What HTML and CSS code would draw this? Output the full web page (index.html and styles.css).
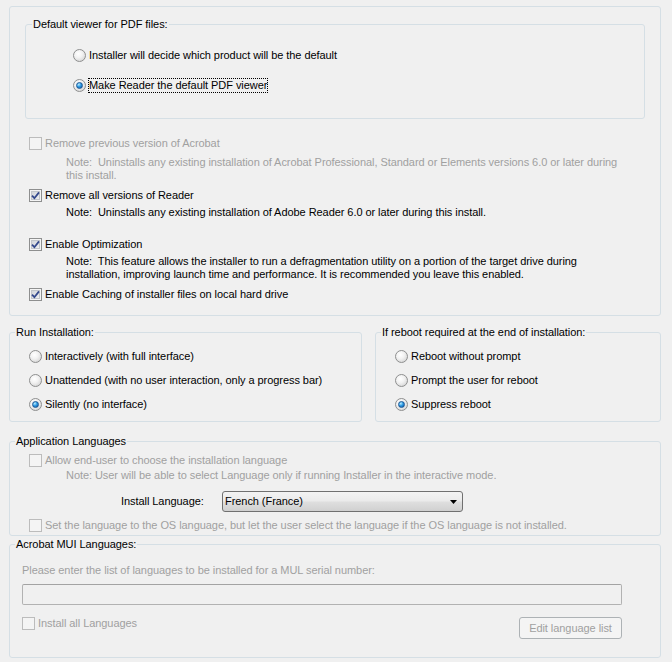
FILE: index.html
```html
<!DOCTYPE html>
<html>
<head>
    <title>Installer Options</title>
    <link rel="stylesheet" href="styles.css">
</head>
<body>
    <div class="panel">
        <fieldset class="viewer">
            <legend>Default viewer for PDF files:</legend>
            <div class="group-body">
                <div class="row"><span class="radio"></span><span>Installer will decide which product will be the default</span></div>
                <div class="row second"><span class="radio on"></span><span class="focus">Make Reader the default PDF viewer</span></div>
            </div>
        </fieldset>

        <div class="row check acrobat off"><span class="box disabled"></span><span>Remove previous version of Acrobat</span></div>
        <div class="note off first-note">Note:&nbsp; Uninstalls any existing installation of Acrobat Professional, Standard or Elements versions 6.0 or later during<br>this install.</div>

        <div class="row check reader"><span class="box"><svg width="9" height="9" viewBox="0 0 9 9"><path d="M1 4.6 L3.4 7.2 L8 1.4" fill="none" stroke="#34498c" stroke-width="1.8"/></svg></span><span>Remove all versions of Reader</span></div>
        <div class="note reader-note">Note:&nbsp; Uninstalls any existing installation of Adobe Reader 6.0 or later during this install.</div>

        <div class="row check optimize"><span class="box"><svg width="9" height="9" viewBox="0 0 9 9"><path d="M1 4.6 L3.4 7.2 L8 1.4" fill="none" stroke="#34498c" stroke-width="1.8"/></svg></span><span>Enable Optimization</span></div>
        <div class="note optimize-note">Note:&nbsp; This feature allows the installer to run a defragmentation utility on a portion of the target drive during<br>installation, improving launch time and performance. It is recommended you leave this enabled.</div>

        <div class="row check caching"><span class="box"><svg width="9" height="9" viewBox="0 0 9 9"><path d="M1 4.6 L3.4 7.2 L8 1.4" fill="none" stroke="#34498c" stroke-width="1.8"/></svg></span><span>Enable Caching of installer files on local hard drive</span></div>
    </div>

    <div class="columns">
        <fieldset class="run">
            <legend>Run Installation:</legend>
            <div class="group-body radios">
                <div class="row"><span class="radio"></span><span>Interactively (with full interface)</span></div>
                <div class="row"><span class="radio"></span><span>Unattended (with no user interaction, only a progress bar)</span></div>
                <div class="row"><span class="radio on"></span><span>Silently (no interface)</span></div>
            </div>
        </fieldset>
        <fieldset class="reboot">
            <legend>If reboot required at the end of installation:</legend>
            <div class="group-body radios">
                <div class="row"><span class="radio"></span><span>Reboot without prompt</span></div>
                <div class="row"><span class="radio"></span><span>Prompt the user for reboot</span></div>
                <div class="row"><span class="radio on"></span><span>Suppress reboot</span></div>
            </div>
        </fieldset>
    </div>

    <fieldset class="languages">
        <legend>Application Languages</legend>
        <div class="group-body">
            <div class="row off"><span class="box disabled"></span><span>Allow end-user to choose the installation language</span></div>
            <div class="note lang-note off">Note: User will be able to select Language only if running Installer in the interactive mode.</div>
            <div class="install-row">
                <span class="install-label">Install Language:</span>
                <div class="select">
                    <span>French (France)</span>
                    <svg width="7" height="4" viewBox="0 0 7 4"><path d="M0 0 H7 L3.5 4 Z" fill="#000"/></svg>
                </div>
            </div>
            <div class="row os-lang off"><span class="box disabled"></span><span>Set the language to the OS language, but let the user select the language if the OS language is not installed.</span></div>
        </div>
    </fieldset>

    <fieldset class="mui">
        <legend>Acrobat MUI Languages:</legend>
        <div class="group-body">
            <div class="off">Please enter the list of languages to be installed for a MUL serial number:</div>
            <div class="field"></div>
            <div class="mui-row">
                <div class="row off"><span class="box disabled"></span><span>Install all Languages</span></div>
                <button class="edit-button" disabled>Edit language list</button>
            </div>
        </div>
    </fieldset>
</body>
</html>
```

FILE: styles.css
```css
body {
    margin: 0;
    padding: 6px 11px 0 9px;
    background: #f0f0f0;
    font-family: "Liberation Sans", Arial, sans-serif;
    font-size: 11px;
    line-height: 13px;
    letter-spacing: -0.06px;
    color: #000;
}

.panel {
    width: 652px;
    box-sizing: border-box;
    border: 1px solid #d5dfe5;
    border-radius: 3px;
    padding: 0 15px 14px;
}

fieldset {
    margin: 0;
    padding: 0;
    border: 1px solid #d5dfe5;
    border-radius: 3px;
    min-width: 0;
}
legend {
    padding: 0 1px;
    margin-left: 5px;
    line-height: 13px;
}

.row {
    display: flex;
    align-items: center;
    height: 13px;
    white-space: nowrap;
}
.off { color: #a0a0a0; }

/* radio buttons */
.radio {
    flex: none;
    display: inline-flex;
    align-items: center;
    justify-content: center;
    width: 13px;
    height: 13px;
    box-sizing: border-box;
    margin-right: 3px;
    border: 1px solid #8e8f8f;
    border-radius: 50%;
    background: radial-gradient(circle at 40% 35%, #fff 0, #f2f2f2 40%, #cacaca 100%);
}
.radio.on::after {
    content: "";
    width: 5px;
    height: 5px;
    border: 1px solid #1c5896;
    border-radius: 50%;
    background: radial-gradient(circle at 35% 30%, #bdeeff 0, #2f9ce4 45%, #0c4d96 100%);
}

/* check boxes */
.box {
    flex: none;
    display: inline-flex;
    align-items: center;
    justify-content: center;
    width: 13px;
    height: 13px;
    box-sizing: border-box;
    margin-right: 3px;
    border: 1px solid #8e8f8f;
    background: linear-gradient(135deg, #c9cdd3, #f7f7f7);
    box-shadow: inset 0 0 0 1px #f4f4f4, inset 0 0 0 2px #c2c6cb;
}
.box.disabled {
    border-color: #bcbcbc;
    background: #f4f4f4;
    box-shadow: none;
}

/* default viewer group */
.viewer { margin-top: 11px; }
.viewer legend { margin-left: 6px; }
.viewer .group-body { padding: 18px 0 26px 47px; }
.viewer .second { margin-top: 17px; }
.focus {
    outline: 1px dotted #000;
    outline-offset: 0;
}

.check { margin-left: 4px; }
.note {
    margin-left: 41px;
    white-space: nowrap;
}
.acrobat { margin-top: 18px; }
.first-note { margin-top: 6px; }
.reader { margin-top: 7px; }
.reader-note { margin-top: 4px; }
.optimize { margin-top: 19px; }
.optimize-note { margin-top: 4px; }
.caching { margin-top: 7px; }

/* run / reboot */
.columns {
    display: flex;
    gap: 13px;
    margin-top: 10px;
    width: 652px;
}
.run { width: 353px; box-sizing: border-box; }
.reboot { width: 286px; box-sizing: border-box; }
.radios { padding: 11px 0 10px 19px; }
.radios .row + .row { margin-top: 11px; }

/* application languages */
.languages {
    width: 652px;
    box-sizing: border-box;
    margin-top: 13px;
}
.languages .group-body { padding: 6px 0 3px 19px; }
.lang-note {
    margin-top: 2px;
    margin-left: 37px;
}
.install-row {
    display: flex;
    align-items: center;
    margin-top: 9px;
}
.install-label {
    width: 101px;
    margin-left: 92px;
}
.select {
    display: flex;
    align-items: center;
    justify-content: space-between;
    width: 241px;
    height: 21px;
    box-sizing: border-box;
    padding: 0 5px 0 2px;
    border: 1px solid #707070;
    border-radius: 3px;
    background: linear-gradient(#f3f3f3, #ebebeb 45%, #dedede 55%, #d0d0d0);
}
.os-lang { margin-top: 7px; }

/* MUI languages */
.mui {
    width: 652px;
    box-sizing: border-box;
    margin-top: 2px;
}
.mui .group-body { padding: 13px 38px 18px 12px; }
.field {
    height: 21px;
    box-sizing: border-box;
    margin-top: 7px;
    border: 1px solid #b2b2b2;
    border-top-color: #a3a3a3;
    border-radius: 2px;
    background: #f0f0f0;
}
.mui-row {
    display: flex;
    justify-content: space-between;
    align-items: flex-start;
    margin-top: 12px;
}
.mui-row .box { margin-right: 3px; }
.edit-button {
    width: 103px;
    height: 22px;
    padding: 0;
    border: 1px solid #adb2b5;
    border-radius: 3px;
    background: #f4f4f4;
    color: #a0a0a0;
    font-family: "Liberation Sans", Arial, sans-serif;
    font-size: 11px;
    letter-spacing: -0.06px;
}
```
